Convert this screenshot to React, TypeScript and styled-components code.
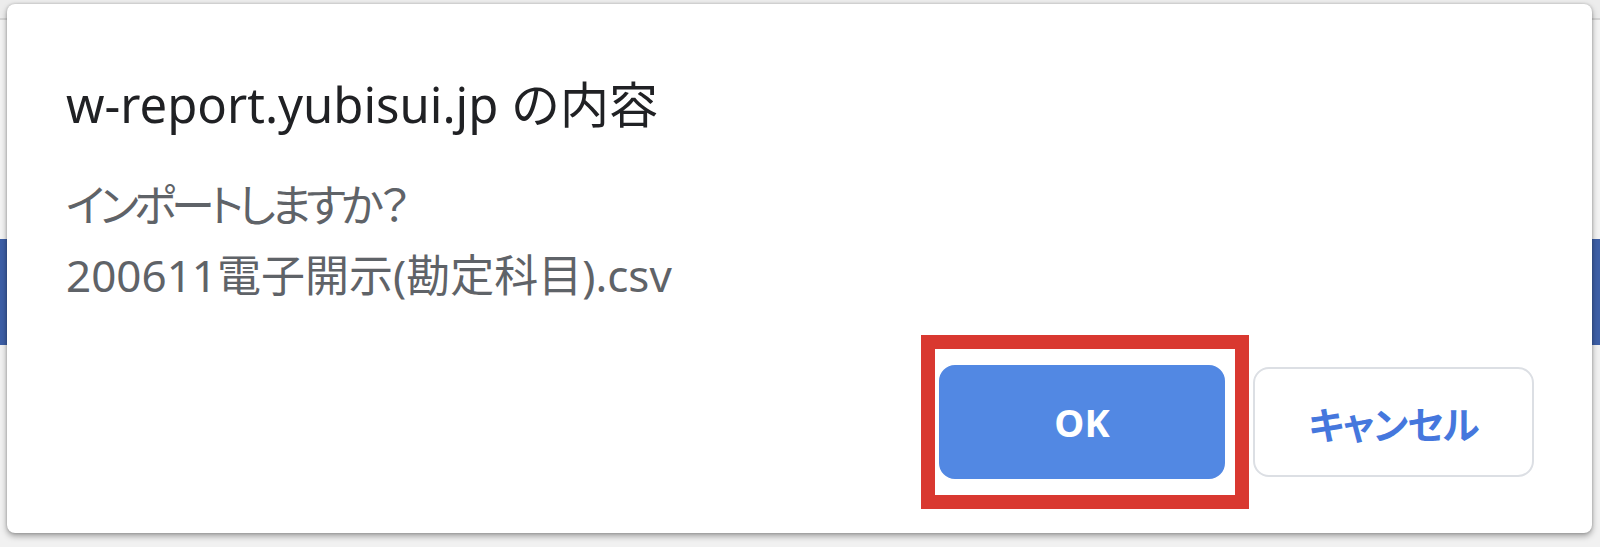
import React from 'react';
import styled, { createGlobalStyle } from 'styled-components';

const GlobalStyle = createGlobalStyle`
  html, body {
    margin: 0;
    padding: 0;
    overflow: hidden;
  }
  body {
    font-family: "Noto Sans", "Noto Sans CJK JP", sans-serif;
  }
`

export default function App() {
  return (
    <>
      <GlobalStyle/>
      <Page>
        <Header>
          <HeaderUser>e</HeaderUser>
        </Header>
        <Gap/>
        <NavBand/>

        <Dialog role="dialog">
          <Title>w-report.yubisui.jp の内容</Title>
          <Message>
            <Line tight>インポートしますか？</Line>
            <Line>200611電子開示(勘定科目).csv</Line>
          </Message>
          <Buttons>
            <Highlight>
              <Button primary>OK</Button>
            </Highlight>
            <Button>キャンセル</Button>
          </Buttons>
        </Dialog>
      </Page>
    </>
  )
}

const Page = styled.div`
  position: relative;
  width: 1600px;
  height: 547px;
  background: #f1f1f1;
  display: flex;
  flex-direction: column;
  overflow: hidden;
`

const Header = styled.div`
  height: 18px;
  background: #ececec;
  border-bottom: 2px solid #d4d4d4;
  display: flex;
  align-items: flex-start;
`

// only the first letter peeks out from under the dialog
const HeaderUser = styled.span`
  margin-left: auto;
  margin-right: -12px;
  margin-top: 46px;
  font-size: 30px;
  line-height: 30px;
  color: #222;
`

const Gap = styled.div`
  height: 219px;
  background: #f3f3f3;
`

const NavBand = styled.div`
  height: 106px;
  background: #3d5fa6;
`

const Dialog = styled.div`
  position: absolute;
  left: 7px;
  top: 4px;
  width: 1585px;
  height: 529px;
  box-sizing: border-box;
  background: #fff;
  border-radius: 8px;
  box-shadow: 0 3px 6px rgba(0, 0, 0, 0.35), 0 0 3px rgba(0, 0, 0, 0.2);
  padding: 70px 58px 24px 59px;
  display: flex;
  flex-direction: column;
`

const Title = styled.div`
  font-size: 49px;
  line-height: 60px;
  color: #202124;
`

const Message = styled.div`
  margin-top: 36px;
  display: flex;
  flex-direction: column;
`

const Line = styled.div<{ tight?: boolean }>`
  font-size: 44px;
  line-height: 70px;
  color: #5f6368;
  font-feature-settings: "palt";
  letter-spacing: ${p => p.tight ? '-5px' : '0'};
`

const Buttons = styled.div`
  margin-top: 25px;
  display: flex;
  justify-content: flex-end;
  align-items: center;
  gap: 4px;
`

const Highlight = styled.div`
  border: 14px solid #d93830;
  padding: 16px 10px 16px 4px;
  display: flex;
`

const Button = styled.button<{ primary?: boolean }>`
  font-family: "Noto Sans", "Noto Sans CJK JP", sans-serif;
  font-feature-settings: "palt";
  font-weight: 700;
  font-size: 38px;
  letter-spacing: ${p => p.primary ? '0' : '-1px'};
  width: ${p => p.primary ? '286px' : '281px'};
  height: ${p => p.primary ? '114px' : '110px'};
  border-radius: 16px;
  border: 2px solid ${p => p.primary ? '#5288e3' : '#dcdfe4'};
  background: ${p => p.primary ? '#5288e3' : '#fff'};
  color: ${p => p.primary ? '#fff' : '#4577dd'};
  display: flex;
  align-items: center;
  justify-content: center;
  padding: 0;
`
